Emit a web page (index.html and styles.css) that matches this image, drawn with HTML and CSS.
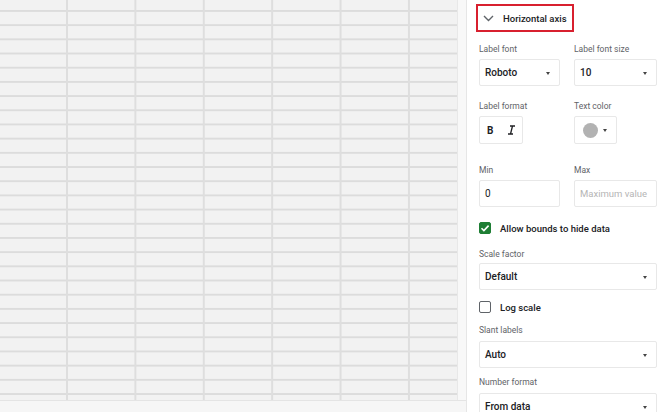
FILE: index.html
```html
<!DOCTYPE html>
<html lang="en">
<head>
    <meta charset="UTF-8">
    <meta name="viewport" content="width=device-width, initial-scale=1.0">
    <title>Chart editor - Horizontal axis</title>
    <link rel="stylesheet" href="styles.css">
</head>
<body>
    <div class="sheet-area">
        <div class="sheet-row">
            <div class="sheet-grid"></div>
            <div class="v-scroll"></div>
        </div>
        <div class="h-scroll"></div>
    </div>

    <aside class="panel">
        <div class="section-head">
            <svg class="chevron" width="11" height="7" viewBox="0 0 11 7">
                <path d="M1 1l4.5 4.5L10 1" fill="none" stroke="#5f6368" stroke-width="1.4"/>
            </svg>
            <span>Horizontal axis</span>
        </div>

        <div class="row first">
            <div class="field">
                <div class="label">Label font</div>
                <div class="select">Roboto <span class="caret"></span></div>
            </div>
            <div class="field">
                <div class="label">Label font size</div>
                <div class="select">10 <span class="caret"></span></div>
            </div>
        </div>

        <div class="row second">
            <div class="field">
                <div class="label">Label format</div>
                <div class="format-box">
                    <span class="fmt bold">B</span>
                    <svg class="fmt-italic" width="9" height="10" viewBox="0 0 9 10">
                        <path d="M3 1h5M1 9h5M5.5 1L3.5 9" fill="none" stroke="#202124" stroke-width="1.3"/>
                    </svg>
                </div>
            </div>
            <div class="field">
                <div class="label">Text color</div>
                <div class="color-box">
                    <span class="swatch"></span>
                    <span class="caret"></span>
                </div>
            </div>
        </div>

        <div class="row third">
            <div class="field">
                <div class="label">Min</div>
                <div class="input">0</div>
            </div>
            <div class="field">
                <div class="label">Max</div>
                <div class="input placeholder">Maximum value</div>
            </div>
        </div>

        <label class="check-row checked-row">
            <span class="checkbox checked">
                <svg width="10" height="10" viewBox="0 0 10 10">
                    <path d="M1.5 5.2l2.4 2.4L8.6 2.6" fill="none" stroke="#fff" stroke-width="1.6"/>
                </svg>
            </span>
            Allow bounds to hide data
        </label>

        <div class="field wide scale">
            <div class="label">Scale factor</div>
            <div class="select">Default <span class="caret"></span></div>
        </div>

        <label class="check-row log-row">
            <span class="checkbox"></span>
            Log scale
        </label>

        <div class="field wide slant">
            <div class="label">Slant labels</div>
            <div class="select">Auto <span class="caret"></span></div>
        </div>

        <div class="field wide number">
            <div class="label">Number format</div>
            <div class="select">From data <span class="caret"></span></div>
        </div>
    </aside>
</body>
</html>
```

FILE: styles.css
```css
* {
    margin: 0;
    padding: 0;
    box-sizing: border-box;
}

body {
    font-family: Roboto, 'Liberation Sans', Arial, sans-serif;
    color: #202124;
    background-color: #fff;
    display: flex;
    width: 669px;
    height: 412px;
    overflow: hidden;
}

/* Hoja de cálculo de fondo */
.sheet-area {
    width: 466px;
    display: flex;
    flex-direction: column;
}

.sheet-row {
    display: flex;
    height: 400px;
}

.sheet-grid {
    width: 457px;
    background-color: #f2f2f2;
    background-image:
        linear-gradient(to right, #dedede 0, #dedede 2px, transparent 2px),
        linear-gradient(to bottom, #dcdcdc 0, #dcdcdc 1.5px, transparent 1.5px);
    background-size: 68.4px 100%, 100% 14.2px;
    background-position: 66px 0, 0 10px;
}

.v-scroll {
    flex: 1;
    background-color: #f8f8f8;
    border-left: 1px solid #e8e8e8;
}

.h-scroll {
    flex: 1;
    background-color: #f6f6f6;
    border-top: 1px solid #e4e4e4;
}

/* Panel del editor */
.panel {
    flex: 1;
    border-left: 1px solid #e6e6e6;
    padding: 4px 12px 0 12px;
}

.section-head {
    display: flex;
    align-items: center;
    width: 98px;
    height: 28px;
    margin-left: -3px;
    border: 2px solid #d8202f;
    padding-left: 5px;
    font-size: 9.5px;
    font-weight: 500;
    white-space: nowrap;
    color: #202124;
}

.chevron {
    margin-right: 9px;
}

.row {
    display: flex;
    gap: 14px;
}

.row .field:first-child {
    width: 81px;
}

.row .field:last-child {
    width: 83px;
}

.row.first { margin-top: 11px; }
.row.second { margin-top: 14px; }
.row.third { margin-top: 20px; }

.label {
    font-size: 8.5px;
    line-height: 12px;
    color: #5f6368;
    margin-bottom: 4px;
}

.select,
.input {
    position: relative;
    display: flex;
    align-items: center;
    height: 27px;
    padding-left: 5px;
    border: 1px solid #e8e8e8;
    border-radius: 2px;
    font-size: 10px;
    font-weight: 500;
    color: #202124;
}

.input {
    font-weight: 400;
}

.input.placeholder {
    color: #b5b5b5;
    font-size: 9.5px;
}

.caret {
    position: absolute;
    right: 9px;
    top: 12px;
    border-left: 2.5px solid transparent;
    border-right: 2.5px solid transparent;
    border-top: 3px solid #444;
}

.format-box,
.color-box {
    position: relative;
    display: flex;
    align-items: center;
    height: 28px;
    border: 1px solid #e8e8e8;
    border-radius: 2px;
}

.format-box {
    width: 44px;
    padding-left: 7px;
    gap: 14px;
}

.fmt {
    font-size: 10px;
    color: #202124;
}

.fmt.bold {
    font-weight: 700;
}

.color-box {
    width: 43px;
    padding-left: 8px;
}

.color-box .caret {
    right: 9px;
    top: 12px;
}

.swatch {
    width: 15px;
    height: 15px;
    border-radius: 50%;
    background-color: #b2b2b2;
}

.check-row {
    display: flex;
    align-items: center;
    height: 20px;
    font-size: 9.5px;
    font-weight: 500;
    color: #202124;
}

.checkbox {
    display: flex;
    align-items: center;
    justify-content: center;
    width: 12px;
    height: 12px;
    margin-right: 9px;
    border: 1.5px solid #5f6368;
    border-radius: 2px;
}

.checkbox.checked {
    background-color: #1e7e34;
    border-color: #1e7e34;
}

.checked-row { margin-top: 11px; }
.field.scale { margin-top: 10px; }
.log-row { margin-top: 7px; }
.field.slant { margin-top: 7px; }
.field.number { margin-top: 8px; }

.field.wide .label {
    margin-bottom: 5px;
}

.field.scale .label {
    margin-bottom: 3px;
}
```
